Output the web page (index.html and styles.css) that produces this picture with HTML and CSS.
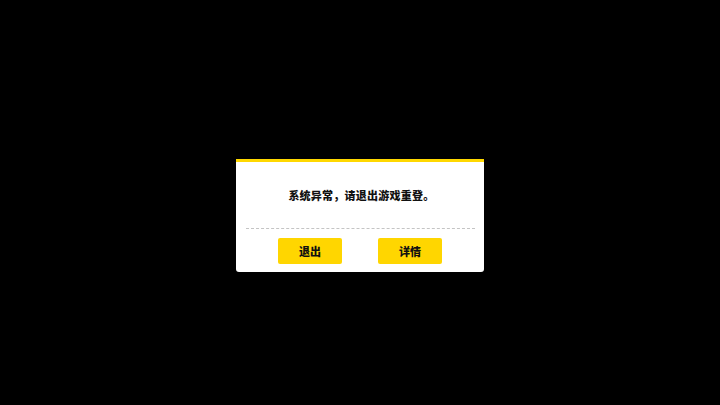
FILE: index.html
```html
<!DOCTYPE html>
<html lang="zh-CN">
<head>
<meta charset="utf-8">
<link rel="stylesheet" href="styles.css">
</head>
<body>
<div class="dialog">
  <div class="message">系统异常，请退出游戏重登。</div>
  <div class="divider"></div>
  <div class="actions">
    <button class="btn">退出</button>
    <button class="btn">详情</button>
  </div>
</div>
</body>
</html>
```
FILE: styles.css
```css
html, body {
  margin: 0;
  padding: 0;
  background: #000;
  width: 720px;
  height: 405px;
  overflow: hidden;
}
body {
  padding-top: 159px;
  box-sizing: border-box;
  font-family: "Noto Sans CJK SC", sans-serif;
}
.dialog {
  width: 248px;
  margin: 0 auto;
  background: #fff;
  border-top: 3px solid #ffd800;
  border-radius: 0 0 3px 3px;
  box-sizing: border-box;
  padding-bottom: 8px;
}
.message {
  height: 66px;
  display: flex;
  align-items: center;
  justify-content: center;
  font-size: 11px;
  font-weight: 900;
  letter-spacing: 0.25px;
  color: #111;
  padding-bottom: 1px;
  padding-left: 3px;
  box-sizing: border-box;
}
.divider {
  margin: 0 9px 0 10px;
  border-top: 1px dashed #c4c4c4;
}
.actions {
  display: flex;
  justify-content: center;
  gap: 36px;
  padding-top: 9px;
}
.btn {
  width: 64px;
  height: 26px;
  border: none;
  border-radius: 2px;
  background: #ffd600;
  font-family: "Noto Sans CJK SC", sans-serif;
  font-size: 11px;
  font-weight: 900;
  color: #111;
  padding: 0;
}
```
